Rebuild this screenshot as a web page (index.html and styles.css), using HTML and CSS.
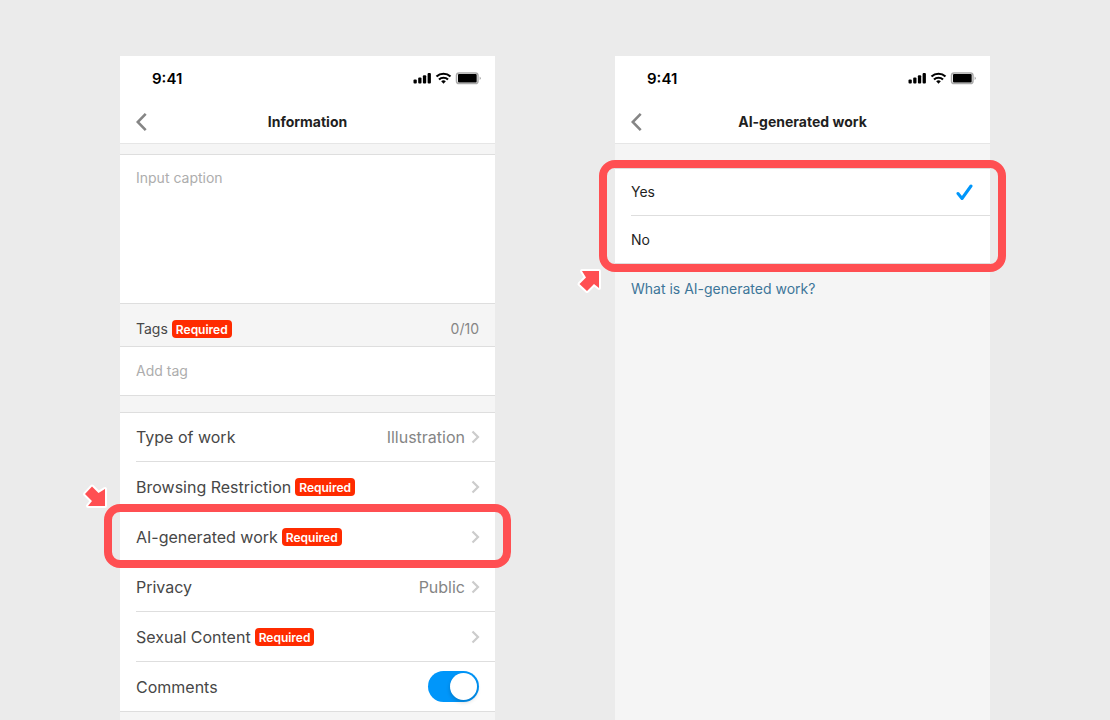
FILE: index.html
```html
<!DOCTYPE html>
<html lang="en">
<head>
    <meta charset="UTF-8">
    <meta name="viewport" content="width=device-width, initial-scale=1.0">
    <title>Information</title>
    <link rel="stylesheet" href="styles.css">
</head>
<body>
    <!-- shared icons -->
    <svg class="sprite" aria-hidden="true">
        <symbol id="status" viewBox="0 0 68 14">
            <rect x="0.500" y="8.500" width="3.300" height="4" rx="1" />
            <rect x="5.200" y="6.500" width="3.300" height="6" rx="1" />
            <rect x="9.900" y="4.300" width="3.300" height="8.200" rx="1" />
            <rect x="14.600" y="2" width="3.300" height="10.500" rx="1" />
            <g fill="none" stroke="#000" stroke-width="2.200">
                <path d="M23.500 5.500a10.300 10.300 0 0 1 14 0" />
                <path d="M26 8.500a6.600 6.600 0 0 1 9 0" />
            </g>
            <path d="M28.200 10.200a3.600 3.600 0 0 1 4.600 0L30.500 12.700z" />
            <rect x="43.500" y="2" width="21.500" height="10.600" rx="2.600" fill="none" stroke="#aaa" stroke-width="1.500" />
            <rect x="45" y="3" width="18.700" height="8.600" rx="1" />
            <path d="M66.600 5.500v3.600q1.200-.6 1.200-1.800t-1.200-1.800z" fill="#aaa" />
        </symbol>
        <symbol id="back" viewBox="0 0 12 20">
            <path d="M9.700 1.800L1.700 10l8 8.200" fill="none" stroke="#858585" stroke-width="2.600" />
        </symbol>
        <symbol id="chevron" viewBox="0 0 9 14">
            <path d="M1.500 1.500L7 7l-5.500 5.500" fill="none" stroke="#ccc" stroke-width="2.200" />
        </symbol>
        <symbol id="arrow" viewBox="0 0 26 26">
            <path d="M3 11L10 3.500l6.500 6.500L23 6v17H6l4-5z" fill="#ff4f52" stroke="#fff" stroke-width="4" stroke-linejoin="round" paint-order="stroke" />
        </symbol>
    </svg>

    <div class="page">
        <main class="phone">
            <div class="status-bar">
                <span>9:41</span>
                <svg class="status-icons"><use href="#status" /></svg>
            </div>
            <header class="nav">
                <button type="button" class="back" aria-label="Back"><svg><use href="#back" /></svg></button>
                <h1>Information</h1>
            </header>

            <form class="info-form">
                <textarea class="caption" placeholder="Input caption" aria-label="Caption"></textarea>

                <div class="tags-header">
                    <label for="tag">Tags</label>
                    <span class="badge">Required</span>
                    <span class="count">0/10</span>
                </div>
                <input type="text" id="tag" class="tag-input" placeholder="Add tag">

                <ul class="settings">
                    <li>
                        <button type="button" class="row">Type of work
                            <span class="value">Illustration</span><svg class="chevron"><use href="#chevron" /></svg>
                        </button>
                    </li>
                    <li>
                        <button type="button" class="row">Browsing Restriction
                            <span class="badge">Required</span><svg class="chevron"><use href="#chevron" /></svg>
                        </button>
                    </li>
                    <li class="highlighted">
                        <button type="button" class="row">AI-generated work
                            <span class="badge">Required</span><svg class="chevron"><use href="#chevron" /></svg>
                        </button>
                        <div class="ring ring-row"></div>
                        <svg class="arrow arrow-down"><use href="#arrow" /></svg>
                    </li>
                    <li>
                        <button type="button" class="row">Privacy
                            <span class="value">Public</span><svg class="chevron"><use href="#chevron" /></svg>
                        </button>
                    </li>
                    <li>
                        <button type="button" class="row">Sexual Content
                            <span class="badge">Required</span><svg class="chevron"><use href="#chevron" /></svg>
                        </button>
                    </li>
                    <li>
                        <label class="row" for="comments">Comments
                            <input type="checkbox" id="comments" class="toggle" checked>
                        </label>
                    </li>
                </ul>
            </form>
        </main>

        <section class="phone">
            <div class="status-bar">
                <span>9:41</span>
                <svg class="status-icons"><use href="#status" /></svg>
            </div>
            <header class="nav">
                <button type="button" class="back" aria-label="Back"><svg><use href="#back" /></svg></button>
                <h1>AI-generated work</h1>
            </header>

            <div class="choices highlighted">
                <label class="choice">Yes
                    <input type="radio" name="ai" value="yes" checked>
                    <svg class="check" viewBox="0 0 18 18"><path d="M3 10.500l4 5L16 3" /></svg>
                </label>
                <label class="choice">No
                    <input type="radio" name="ai" value="no">
                    <svg class="check" viewBox="0 0 18 18"><path d="M3 10.500l4 5L16 3" /></svg>
                </label>
                <div class="ring ring-group"></div>
                <svg class="arrow arrow-up"><use href="#arrow" /></svg>
            </div>
            <a href="#" class="help">What is AI-generated work?</a>
        </section>
    </div>
</body>
</html>
```
FILE: styles.css
```css
* {
    box-sizing: border-box;
}

body {
    margin: 0;
    background-color: #ebebeb;
    font-family: Inter, "Liberation Sans", sans-serif;
    font-size: 14px;
    color: #1f1f1f;
}

button, input, textarea {
    font: inherit;
    color: inherit;
}

button {
    border: none;
    background: none;
    padding: 0;
    cursor: pointer;
}

.sprite {
    display: none;
}

.page {
    display: grid;
    grid-template-columns: 1fr 1fr;
    gap: 120px;
    min-height: 100vh;
    padding: 56px 120px 0;
}

.phone {
    background-color: #f5f5f5;
}

.status-bar {
    display: flex;
    justify-content: space-between;
    align-items: center;
    height: 44px;
    padding: 0 14px 0 32px;
    background-color: #fff;
    color: #000;
    font-size: 15px;
    font-weight: 600;
}

.status-icons {
    width: 68px;
    height: 14px;
}

.nav {
    display: grid;
    grid-template-columns: 24px 1fr 24px;
    align-items: center;
    height: 44px;
    padding: 0 16px;
    background-color: #fff;
    border-bottom: 1px solid #e6e6e6;
}

.nav h1 {
    margin: 0;
    font-size: 14px;
    font-weight: 700;
    text-align: center;
}

.back {
    display: flex;
}

.back svg {
    width: 12px;
    height: 20px;
}

/* Information form */
.info-form {
    padding-top: 10px;
    color: #474747;
}

.caption {
    display: block;
    width: 100%;
    height: 150px;
    padding: 14px 16px;
    border: solid #dedede;
    border-width: 1px 0;
    background-color: #fff;
    resize: none;
}

::placeholder {
    color: #adadad;
    opacity: 1;
}

.tags-header {
    display: flex;
    align-items: center;
    gap: 4px;
    height: 42px;
    padding: 8px 16px 0;
    line-height: 18px;
}

.badge {
    padding: 1px 4px 0;
    border-radius: 4px;
    background-color: #ff2b00;
    color: #fff;
    font-size: 12px;
    font-weight: 600;
    line-height: 17px;
}

.count {
    margin-left: auto;
    color: #858585;
}

.tag-input {
    display: block;
    width: 100%;
    height: 50px;
    padding: 0 16px 2px;
    border: solid #dedede;
    border-width: 1px 0;
    background-color: #fff;
}

.settings {
    margin: 16px 0 0;
    padding: 0 0 0 16px;
    border: solid #dedede;
    border-width: 1px 0;
    background-color: #fff;
    list-style: none;
    font-size: 16px;
}

.settings li + li {
    border-top: 1px solid #dedede;
}

.row {
    display: flex;
    align-items: center;
    gap: 4px;
    width: 100%;
    height: 49px;
    padding-right: 15px;
    line-height: 20px;
}

.settings li:first-child .row {
    height: 48px;
}

.value {
    margin-left: auto;
    color: #858585;
}

.chevron {
    width: 9px;
    height: 14px;
}

.value + .chevron {
    margin-left: 2px;
}

.badge + .chevron {
    margin-left: auto;
}

.toggle {
    appearance: none;
    width: 51px;
    height: 31px;
    margin: 0 1px 0 auto;
    padding: 2px;
    border-radius: 16px;
    background-color: #ccc;
    cursor: pointer;
}

.toggle::before {
    content: "";
    display: block;
    width: 27px;
    height: 27px;
    border-radius: 50%;
    background-color: #fff;
    box-shadow: 0 2px 4px rgba(0, 0, 0, 0.2);
}

.toggle:checked {
    background-color: #0096fa;
}

.toggle:checked::before {
    margin-left: auto;
}

/* AI-generated work choices */
.choices {
    margin-top: 24px;
    border: solid #dedede;
    border-width: 1px 0;
    background-color: #fff;
    padding-left: 16px;
}

.choice {
    display: flex;
    align-items: center;
    height: 46px;
    padding-right: 17px;
    line-height: 18px;
}

.choice + .choice {
    height: 48px;
    border-top: 1px solid #dedede;
}

.choice input {
    appearance: none;
    margin: 0;
}

.check {
    display: none;
    width: 18px;
    height: 18px;
    margin-left: auto;
    fill: none;
    stroke: #0096fa;
    stroke-width: 3;
    stroke-linecap: round;
    stroke-linejoin: round;
}

.choice input:checked + .check {
    display: block;
}

.help {
    display: block;
    margin: 16px 16px 0;
    color: #3d7699;
    line-height: 18px;
    text-decoration: none;
}

/* Callouts drawn over the screens */
.highlighted {
    position: relative;
}

.ring {
    position: absolute;
    border: 8px solid #ff4f52;
    border-radius: 16px;
    pointer-events: none;
    z-index: 1;
}

.ring-row {
    inset: -8px -16px -7px -32px;
}

.ring-group {
    inset: -9px -16px;
}

.arrow {
    position: absolute;
    width: 26px;
    height: 26px;
    overflow: visible;
    z-index: 2;
}

.arrow-down {
    top: -29px;
    left: -54px;
}

.arrow-up {
    bottom: -31px;
    left: -39px;
    transform: rotate(-90deg);
}
```
